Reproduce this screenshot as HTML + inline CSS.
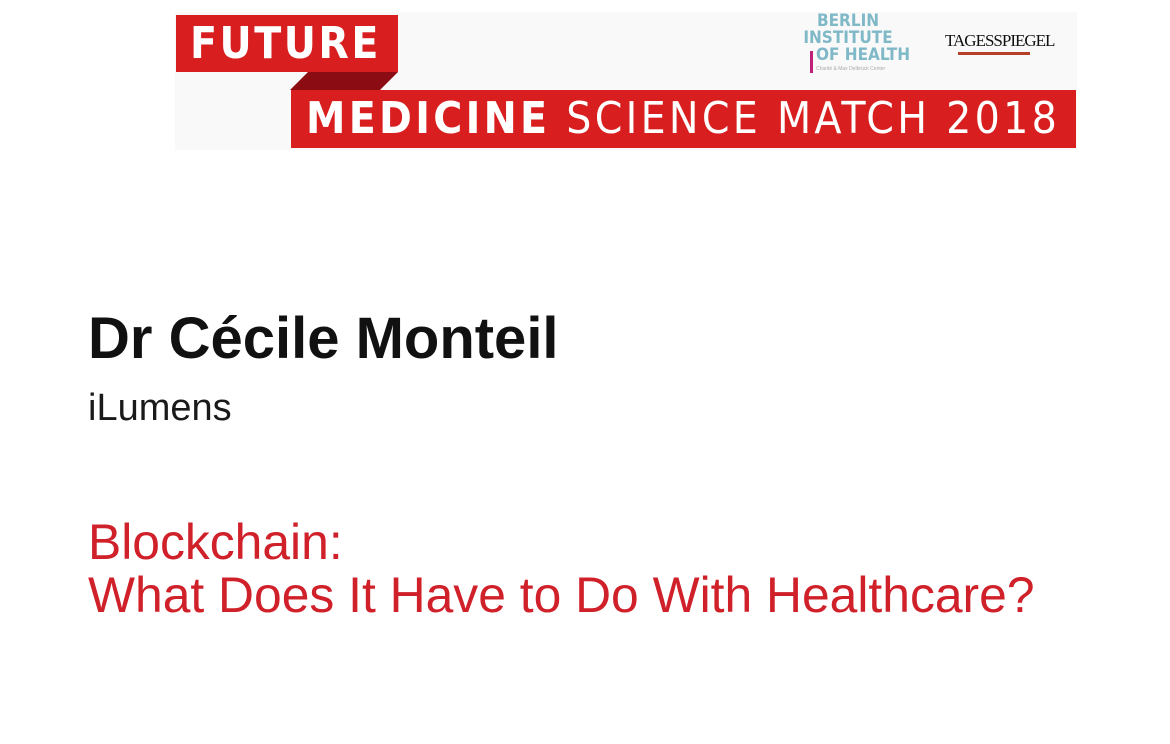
<!DOCTYPE html>
<html><head><style>
body{margin:0;width:1170px;height:744px;background:#fff;position:relative;overflow:hidden;font-family:"Liberation Sans",sans-serif}
.hdr{position:absolute;left:175px;top:12px;width:902px;height:138px;background:#f9f9f9}
.b{position:absolute;background:#d81e1e}
.t{position:absolute;white-space:nowrap}
</style></head><body>
<div class="hdr"></div>
<div class="b" style="left:176px;top:15px;width:222px;height:57px"></div>
<svg style="position:absolute;left:290px;top:72px" width="110" height="20"><polygon points="0,18 18,0 108,0 90,18" fill="#8c0c14"/></svg>
<div class="b" style="left:291px;top:90px;width:785px;height:58px"></div>
<div class="t" style="left:190px;top:18px;font:bold 44px 'DejaVu Sans Condensed','Liberation Sans',sans-serif;color:#fff;letter-spacing:2.5px">FUTURE</div>
<div class="t" style="left:306px;top:93px;font:44px 'DejaVu Sans Condensed','Liberation Sans',sans-serif;color:#fff;letter-spacing:3.3px"><b>MEDICINE</b> SCIENCE MATCH 2018</div>
<div class="t" style="left:796px;top:13px;font:bold 17px/17px 'DejaVu Sans Condensed',sans-serif;color:#7fb8c6;text-align:center;width:104px">BERLIN<br>INSTITUTE</div>
<div class="t" style="left:816px;top:47px;font:bold 17px/17px 'DejaVu Sans Condensed',sans-serif;color:#7fb8c6">OF HEALTH</div>
<div style="position:absolute;left:810px;top:51px;width:3px;height:22px;background:#c0207a"></div>
<div class="t" style="left:816px;top:66px;font:5px sans-serif;color:#aaa">Charité & Max Delbrück Center</div>
<div class="t" style="left:945px;top:31px;font:17px 'Liberation Serif',serif;color:#111;letter-spacing:-1px">TAGESSPIEGEL</div>
<div style="position:absolute;left:958px;top:52px;width:72px;height:3px;background:#b5402a"></div>
<div class="t" style="left:88px;top:305px;font:bold 58px 'Liberation Sans',sans-serif;color:#111">Dr Cécile Monteil</div>
<div class="t" style="left:88px;top:387px;font:38px 'Liberation Sans',sans-serif;color:#1a1a1a">iLumens</div>
<div class="t" style="left:88px;top:516px;font:49.8px/53px 'Liberation Sans',sans-serif;color:#d0202a">Blockchain:<br>What Does It Have to Do With Healthcare?</div>
</body></html>
